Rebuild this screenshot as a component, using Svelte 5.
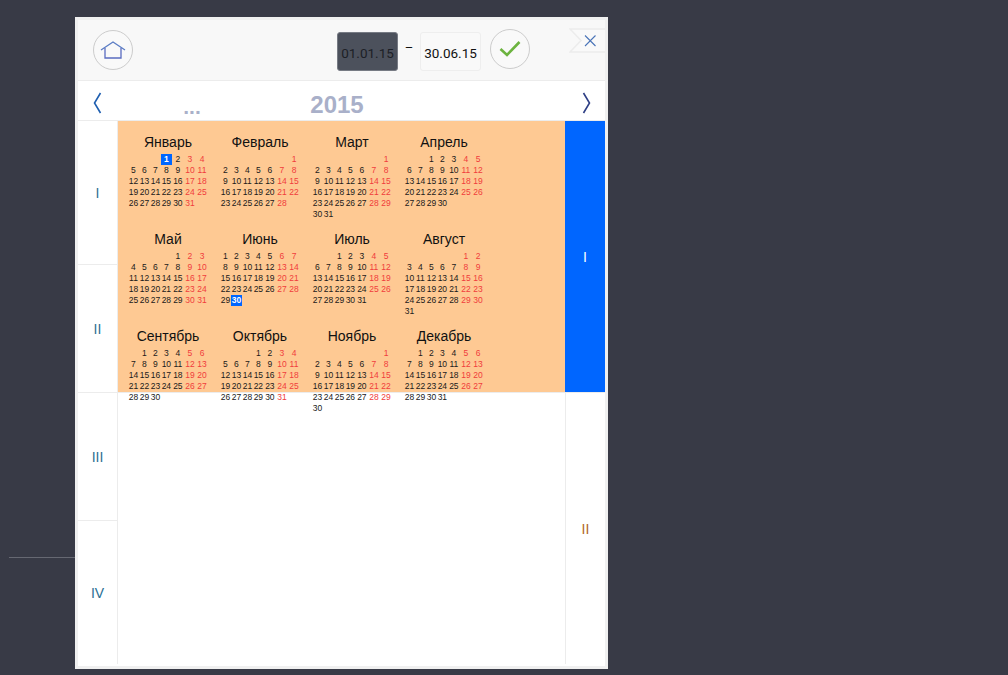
<script>
  const monthNames = ['Январь', 'Февраль', 'Март', 'Апрель', 'Май', 'Июнь', 'Июль', 'Август', 'Сентябрь', 'Октябрь', 'Ноябрь', 'Декабрь'];
  const year = 2015;

  // Weeks start on Monday, empty cells are null
  function buildWeeks(month) {
    const first = (new Date(year, month, 1).getDay() + 6) % 7;
    const total = new Date(year, month + 1, 0).getDate();
    const cells = Array(first).fill(null);
    for (let d = 1; d <= total; d++) cells.push(d);
    const weeks = [];
    for (let i = 0; i < cells.length; i += 7) {
      const week = cells.slice(i, i + 7);
      while (week.length < 7) week.push(null);
      weeks.push(week);
    }
    return weeks;
  }

  function isPicked(month, day) {
    return (month === 0 && day === 1) || (month === 5 && day === 30);
  }

  const months = monthNames.map((name, i) => ({ name, index: i, weeks: buildWeeks(i) }));
</script>

<div class="rule"></div>

<div class="panel">
  <header class="top">
    <button class="round home" aria-label="Домой">
      <svg width="26" height="20" viewBox="0 0 26 20">
        <path d="M1 10 L13 2 L25 10" fill="none" stroke="#5a7cc4" stroke-width="1.3" />
        <path d="M5 8 V18 H21 V8" fill="none" stroke="#5a6cc0" stroke-width="1.3" />
      </svg>
    </button>
    <div class="range">
      <div class="date active">01.01.15</div>
      <span class="dash">–</span>
      <div class="date">30.06.15</div>
      <button class="round" aria-label="Применить">
        <svg width="24" height="20" viewBox="0 0 24 20">
          <path d="M2.5 10 L9 16 L21.5 3" fill="none" stroke="#6cb33f" stroke-width="2.6" />
        </svg>
      </button>
    </div>
    <svg class="close" width="36" height="25" viewBox="0 0 36 25">
      <path d="M36 1 H1 L12 12.5 L1 24 H36" fill="#f9f9f9" stroke="#ececec" stroke-width="1.6" />
      <path d="M16 7.5 L26.5 18 M26.5 7.5 L16 18" fill="none" stroke="#4a74b8" stroke-width="1.1" />
    </svg>
  </header>

  <div class="years">
    <svg class="arrow" width="9" height="22" viewBox="0 0 9 22">
      <path d="M7.5 1 L1.5 11 L7.5 21" fill="none" stroke="#1f5fb0" stroke-width="1.6" />
    </svg>
    <span class="more">...</span>
    <span class="year">{year}</span>
    <svg class="arrow" width="9" height="22" viewBox="0 0 9 22">
      <path d="M1.5 1 L7.5 11 L1.5 21" fill="none" stroke="#2e3f85" stroke-width="1.6" />
    </svg>
  </div>

  <div class="body">
    <div class="quarters">
      <div>I</div>
      <div>II</div>
      <div>III</div>
      <div>IV</div>
    </div>

    <div class="main">
      <div class="selection"></div>
      <div class="months">
        {#each months as m}
          <div class="month">
            <div class="title">{m.name}</div>
            <table>
              <tbody>
                {#each m.weeks as week}
                  <tr>
                    {#each week as day, col}
                      <td class:weekend={col > 4} class:picked={isPicked(m.index, day)}>{day ?? ''}</td>
                    {/each}
                  </tr>
                {/each}
              </tbody>
            </table>
          </div>
        {/each}
      </div>
    </div>

    <div class="halves">
      <div class="on">I</div>
      <div>II</div>
    </div>
  </div>
</div>

<style>
  :global(body) {
    margin: 0;
    background: #383a46;
    overflow: hidden;
    font-family: 'Liberation Sans', Arial, sans-serif;
  }

  .rule {
    position: absolute;
    left: 9px;
    top: 557px;
    width: 66px;
    height: 1px;
    background: #666872;
  }

  .panel {
    margin: 17px 0 0 75px;
    width: 533px;
    height: 652px;
    box-sizing: border-box;
    border: 3px solid #f0f0f0;
    background: #fff;
    display: flex;
    flex-direction: column;
  }

  .top {
    position: relative;
    height: 61px;
    flex: none;
    box-sizing: border-box;
    padding: 0 15px 1px;
    display: flex;
    align-items: center;
    background: #f8f8f8;
    border-bottom: 1px solid #ececec;
  }

  .round {
    width: 40px;
    height: 40px;
    padding: 0;
    box-sizing: border-box;
    border: 1px solid #ccc;
    border-radius: 50%;
    background: #f9f9f9;
    display: flex;
    align-items: center;
    justify-content: center;
  }

  .range {
    margin-left: 204px;
    display: flex;
    align-items: center;
  }

  .date {
    width: 61px;
    height: 39px;
    box-sizing: border-box;
    border: 1px solid #eee;
    border-radius: 3px;
    background: #f9f9f9;
    color: #111;
    font: 13.5px/41px Roboto, sans-serif;
    text-align: center;
    margin-top: 3px;
  }

  .date.active {
    background: #4c515c;
    border-color: #777b84;
    color: #1c1f26;
  }

  .dash {
    width: 22px;
    text-align: center;
    font: 13px Roboto, sans-serif;
    color: #111;
    margin-top: -4px;
  }

  .range .round {
    margin: -2px 0 0 9px;
  }

  .close {
    position: absolute;
    right: 0;
    top: 8px;
  }

  .years {
    height: 40px;
    flex: none;
    box-sizing: border-box;
    padding: 5px 14px 0 15px;
    display: flex;
    align-items: center;
    border-bottom: 1px solid #ececec;
  }

  .arrow {
    flex: none;
  }

  .more {
    margin: 0 0 0 80px;
    width: 20px;
    font-size: 21px;
    font-weight: bold;
    line-height: 20px;
    color: #a9b0c9;
    padding-top: 8px;
    text-align: center;
  }

  .year {
    margin-left: 106px;
    width: 58px;
    margin-right: auto;
    font-size: 24px;
    font-weight: bold;
    color: #a9b0c9;
    text-align: center;
    padding-top: 3px;
  }

  .body {
    height: 543px;
    flex: none;
    display: flex;
  }

  .quarters {
    width: 40px;
    flex: none;
    box-sizing: border-box;
    border-right: 1px solid #ececec;
    display: grid;
    grid-template-rows: 144px 128px 128px 1fr;
  }

  .quarters div,
  .halves div {
    display: flex;
    align-items: center;
    justify-content: center;
    font: 14px 'Liberation Sans', sans-serif;
    color: #2b6f94;
  }

  .quarters div:not(:last-child) {
    border-bottom: 1px solid #ececec;
  }

  .main {
    position: relative;
    flex: 1;
    min-width: 0;
  }

  .selection {
    position: absolute;
    left: 0;
    right: 0;
    top: 0;
    height: 272px;
    box-sizing: border-box;
    background: #fec993;
    border-bottom: 1px solid #ececec;
  }

  .months {
    position: relative;
    width: 368px;
    padding: 8px 0 0 4px;
    display: grid;
    grid-template-columns: repeat(4, 92px);
    row-gap: 6px;
  }

  .month {
    display: flex;
    flex-direction: column;
    align-items: center;
  }

  .title {
    height: 25px;
    line-height: 27px;
    font-size: 14px;
    color: #111;
  }

  table {
    border-collapse: collapse;
    border-spacing: 0;
  }

  td {
    height: 11px;
    padding: 0 0.75px;
    font-size: 8.5px;
    line-height: 11px;
    text-align: center;
    color: #1a1a1a;
  }

  td:nth-child(n + 5) {
    padding: 0 1.3px;
  }

  td.weekend {
    color: #f03c3c;
  }

  td.picked {
    background: #0066ff;
    color: #fff;
    font-weight: bold;
  }

  .halves {
    width: 40px;
    flex: none;
    box-sizing: border-box;
    border-left: 1px solid #ececec;
    display: grid;
    grid-template-rows: 272px 1fr;
  }

  .halves div {
    color: #b0672a;
  }

  .halves .on {
    box-sizing: border-box;
    margin-left: -1px;
    background: #0066ff;
    border-bottom: 1px solid #ececec;
    color: #fff;
  }
</style>
